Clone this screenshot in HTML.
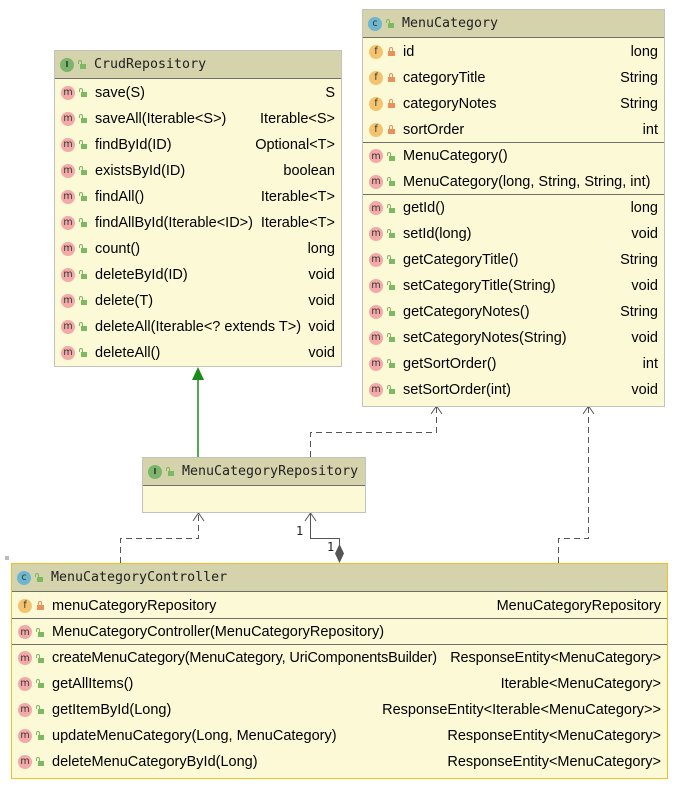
<!DOCTYPE html>
<html><head><meta charset="utf-8"><style>
body{margin:0;width:678px;height:793px;background:#fff;position:relative;overflow:hidden;font-family:"Liberation Sans","DejaVu Sans",sans-serif;font-size:14.5px;color:#000}
.box{position:absolute;background:#fcf9d6;border:1px solid #c3c3bb;box-sizing:border-box}
.hd{height:27px;background:#d5d3ac;border-bottom:1px solid #6f6f6a;display:flex;align-items:center;padding-left:5px;font-family:"DejaVu Sans Mono",monospace;font-size:13.3px;color:#222}
.row{height:26px;display:flex;align-items:center;padding:1px 6px 0 6px;box-sizing:border-box;white-space:nowrap}
.row .n{flex:1;margin-right:6px}
.sep{border-top:1px solid #6f6f6a}
.ic{width:14px;height:14px;border-radius:50%;display:inline-flex;align-items:center;justify-content:center;font-family:"DejaVu Sans",sans-serif;font-size:9.5px;margin-right:4px;flex:none}
.m{background:#f4a9a9;color:#333}
.f{background:#f4c36f;color:#333}
.c{background:#6db6cf;color:#333}
.i{background:#7bb46b;color:#333;font-weight:bold;font-size:8px}
.lk{width:8px;height:9px;margin-right:8px;flex:none;position:relative}
.lk.o:before{content:"";position:absolute;left:2px;bottom:0;width:6px;height:5px;background:#7db862}
.lk.o:after{content:"";position:absolute;left:0;top:0;width:2px;height:3px;border:1.5px solid #7db862;border-bottom:none;border-radius:2px 2px 0 0}
.lk.p:before{content:"";position:absolute;left:1px;bottom:0;width:7px;height:5px;background:#e8915a}
.lk.p:after{content:"";position:absolute;left:2px;top:0;width:2px;height:3px;border:1.5px solid #e8915a;border-bottom:none;border-radius:2px 2px 0 0}
</style></head><body>
<svg width="678" height="793" style="position:absolute;left:0;top:0">
<g fill="none" stroke="#555" stroke-width="1">
<path d="M198 380V457" stroke="#1a8a1a" stroke-width="1.5"/>
<path d="M310.5 457V432.5H436.5V406" stroke-dasharray="6,4"/>
<path d="M431 414L436.5 406L442 414"/>
<path d="M120.5 563V538.5H198.5V513" stroke-dasharray="6,4"/>
<path d="M193 521L198.5 513L204 521"/>
<path d="M558.5 563V538.5H588.5V406" stroke-dasharray="6,4"/>
<path d="M583 414L588.5 406L594 414"/>
<path d="M310.5 513V538.5H339.5V546"/>
<path d="M305 521L310.5 513L316 521"/>
</g>
<path d="M198 367L192 380H204Z" fill="#1a8a1a"/>
<path d="M339.5 544L344 553.5L339.5 563L335 553.5Z" fill="#555"/>
<text x="296" y="535" font-family="DejaVu Sans Mono" font-size="12" fill="#222">1</text>
<text x="327" y="551" font-family="DejaVu Sans Mono" font-size="12" fill="#222">1</text>
<rect x="5" y="556" width="4" height="4" fill="#bbb"/>
</svg>

<div class="box" style="left:54px;top:50px;width:288px;height:317px">
<div class="hd"><span class="ic i">I</span><span class="lk o"></span>CrudRepository</div>
<div class="row"><span class="ic m">m</span><span class="lk o"></span><span class="n">save(S)</span>S</div>
<div class="row"><span class="ic m">m</span><span class="lk o"></span><span class="n">saveAll(Iterable&lt;S&gt;)</span>Iterable&lt;S&gt;</div>
<div class="row"><span class="ic m">m</span><span class="lk o"></span><span class="n">findById(ID)</span>Optional&lt;T&gt;</div>
<div class="row"><span class="ic m">m</span><span class="lk o"></span><span class="n">existsById(ID)</span>boolean</div>
<div class="row"><span class="ic m">m</span><span class="lk o"></span><span class="n">findAll()</span>Iterable&lt;T&gt;</div>
<div class="row"><span class="ic m">m</span><span class="lk o"></span><span class="n">findAllById(Iterable&lt;ID&gt;)</span>Iterable&lt;T&gt;</div>
<div class="row"><span class="ic m">m</span><span class="lk o"></span><span class="n">count()</span>long</div>
<div class="row"><span class="ic m">m</span><span class="lk o"></span><span class="n">deleteById(ID)</span>void</div>
<div class="row"><span class="ic m">m</span><span class="lk o"></span><span class="n">delete(T)</span>void</div>
<div class="row"><span class="ic m">m</span><span class="lk o"></span><span class="n" style="margin-right:3px">deleteAll(Iterable&lt;? extends T&gt;)</span>void</div>
<div class="row"><span class="ic m">m</span><span class="lk o"></span><span class="n">deleteAll()</span>void</div>
</div>

<div class="box" style="left:362px;top:9px;width:303px;height:398px">
<div class="hd"><span class="ic c">c</span><span class="lk o"></span>MenuCategory</div>
<div class="row"><span class="ic f">f</span><span class="lk p"></span><span class="n">id</span>long</div>
<div class="row"><span class="ic f">f</span><span class="lk p"></span><span class="n">categoryTitle</span>String</div>
<div class="row"><span class="ic f">f</span><span class="lk p"></span><span class="n">categoryNotes</span>String</div>
<div class="row"><span class="ic f">f</span><span class="lk p"></span><span class="n">sortOrder</span>int</div>
<div class="row sep"><span class="ic m">m</span><span class="lk o"></span><span class="n">MenuCategory()</span></div>
<div class="row"><span class="ic m">m</span><span class="lk o"></span><span class="n">MenuCategory(long, String, String, int)</span></div>
<div class="row sep"><span class="ic m">m</span><span class="lk o"></span><span class="n">getId()</span>long</div>
<div class="row"><span class="ic m">m</span><span class="lk o"></span><span class="n">setId(long)</span>void</div>
<div class="row"><span class="ic m">m</span><span class="lk o"></span><span class="n">getCategoryTitle()</span>String</div>
<div class="row"><span class="ic m">m</span><span class="lk o"></span><span class="n">setCategoryTitle(String)</span>void</div>
<div class="row"><span class="ic m">m</span><span class="lk o"></span><span class="n">getCategoryNotes()</span>String</div>
<div class="row"><span class="ic m">m</span><span class="lk o"></span><span class="n">setCategoryNotes(String)</span>void</div>
<div class="row"><span class="ic m">m</span><span class="lk o"></span><span class="n">getSortOrder()</span>int</div>
<div class="row"><span class="ic m">m</span><span class="lk o"></span><span class="n">setSortOrder(int)</span>void</div>
</div>

<div class="box" style="left:142px;top:457px;width:224px;height:56px">
<div class="hd"><span class="ic i">I</span><span class="lk o"></span>MenuCategoryRepository</div>
</div>

<div class="box" style="left:11px;top:563px;width:657px;height:216px;border-color:#f0c020">
<div class="hd"><span class="ic c">c</span><span class="lk o"></span>MenuCategoryController</div>
<div class="row"><span class="ic f">f</span><span class="lk p"></span><span class="n">menuCategoryRepository</span>MenuCategoryRepository</div>
<div class="row sep"><span class="ic m">m</span><span class="lk o"></span><span class="n">MenuCategoryController(MenuCategoryRepository)</span></div>
<div class="row sep"><span class="ic m">m</span><span class="lk o"></span><span class="n" style="letter-spacing:-0.15px">createMenuCategory(MenuCategory, UriComponentsBuilder)</span><span style="letter-spacing:-0.1px">ResponseEntity&lt;MenuCategory&gt;</span></div>
<div class="row"><span class="ic m">m</span><span class="lk o"></span><span class="n">getAllItems()</span>Iterable&lt;MenuCategory&gt;</div>
<div class="row"><span class="ic m">m</span><span class="lk o"></span><span class="n">getItemById(Long)</span>ResponseEntity&lt;Iterable&lt;MenuCategory&gt;&gt;</div>
<div class="row"><span class="ic m">m</span><span class="lk o"></span><span class="n">updateMenuCategory(Long, MenuCategory)</span>ResponseEntity&lt;MenuCategory&gt;</div>
<div class="row"><span class="ic m">m</span><span class="lk o"></span><span class="n">deleteMenuCategoryById(Long)</span>ResponseEntity&lt;MenuCategory&gt;</div>
</div>
</body></html>
